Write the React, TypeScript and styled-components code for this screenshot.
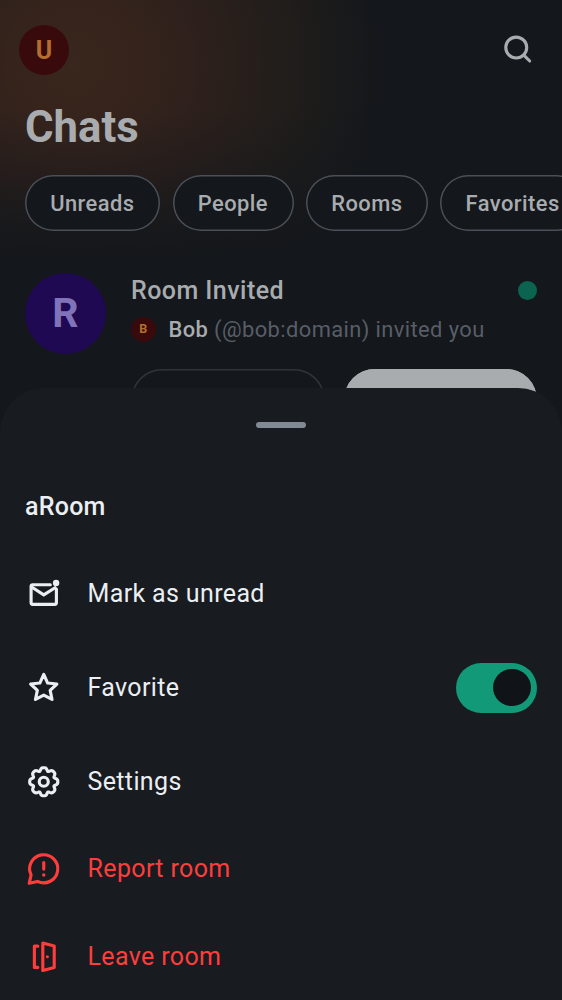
import React from "react";
import styled, { createGlobalStyle } from "styled-components";

const GlobalStyle = createGlobalStyle`
  * { box-sizing: border-box; }
  html, body { margin: 0; padding: 0; background: #14171b; }
  body { font-family: Roboto, sans-serif; overflow: hidden; }
`;

const Screen = styled.div`
  position: relative;
  width: 562px;
  height: 1000px;
  overflow: hidden;
  background: #14171b;
`;

const ChatsPage = styled.main`
  height: 100%;
  background:
    linear-gradient(to bottom, rgba(20, 23, 27, 0) 110px, rgba(20, 23, 27, 0.3) 170px, rgba(20, 23, 27, 1) 256px),
    radial-gradient(circle at 75px 65px, #39261c 0, #36241c 60px, #2d201c 130px, #231e1b 200px, #1b1b1b 255px, #14171b 305px);
`;

const TopBar = styled.header`
  display: flex;
  align-items: center;
  justify-content: space-between;
  height: 100px;
  padding: 0 25px 0 19px;
`;

const Avatar = styled.div<{ $size: number; $font: number; $bg: string; $fg: string }>`
  display: flex;
  flex: none;
  align-items: center;
  justify-content: center;
  width: ${(p) => p.$size}px;
  height: ${(p) => p.$size}px;
  border-radius: 50%;
  background: ${(p) => p.$bg};
  color: ${(p) => p.$fg};
  font-size: ${(p) => p.$font}px;
  font-weight: 700;
  line-height: 1;
`;

const Title = styled.h1`
  margin: 0;
  padding: 1px 25px 0;
  height: 75px;
  font-size: 43.7px;
  line-height: 53px;
  font-weight: 700;
  color: #a9acaf;
`;

const Filters = styled.nav`
  display: flex;
  gap: 12.5px;
  padding-left: 25px;
`;

const Chip = styled.button`
  flex: none;
  height: 56px;
  padding: 0 25.5px 0 25.2px;
  border: 0;
  border-radius: 28px;
  box-shadow: inset 0 0 0 1.5px #4b5058;
  background: #14171b;
  color: #a9acaf;
  font-family: inherit;
  font-size: 21.9px;
  font-weight: 500;
  letter-spacing: 0.45px;
  white-space: nowrap;
`;

const InviteRow = styled.section`
  display: flex;
  gap: 25px;
  padding: 42.4px 25px 0;
`;

const InviteBody = styled.div`
  flex: 1;
  min-width: 0;
`;

const InviteHead = styled.div`
  display: flex;
  align-items: center;
  justify-content: space-between;
  height: 35px;
`;

const RoomName = styled.span`
  font-size: 25px;
  font-weight: 500;
  letter-spacing: 0.45px;
  color: #a9acaf;
`;

const UnreadDot = styled.i`
  width: 19px;
  height: 19px;
  border-radius: 50%;
  background: #0b6450;
`;

const Inviter = styled.div`
  display: flex;
  align-items: center;
  gap: 12.5px;
  height: 42px;
  font-size: 21.9px;
  letter-spacing: 0.4px;
  color: #585e67;
  white-space: nowrap;

  b { font-weight: 500; color: #a9acaf; }
`;

const Actions = styled.div`
  display: flex;
  gap: 19px;
  padding-top: 18.6px;
`;

const ActionButton = styled.button<{ $filled?: boolean }>`
  flex: 1;
  height: 62.5px;
  border: 0;
  border-radius: 31.25px;
  box-shadow: inset 0 0 0 1.5px ${(p) => (p.$filled ? "#a9acaf" : "#303439")};
  background: ${(p) => (p.$filled ? "#a9acaf" : "transparent")};
`;

const Sheet = styled.aside`
  position: absolute;
  left: 0;
  right: 0;
  bottom: 0;
  height: 612.5px;
  border-radius: 44px 44px 0 0;
  background: #181b1f;
  color: #ebeef2;
`;

const HandleArea = styled.div`
  display: flex;
  justify-content: center;
  height: 75px;
  padding-top: 34.5px;
`;

const Handle = styled.div`
  width: 50px;
  height: 6px;
  border-radius: 3px;
  background: #808994;
`;

const SheetTitle = styled.h2`
  display: flex;
  align-items: center;
  height: 87.5px;
  margin: 0;
  padding: 0 25px;
  font-size: 25px;
  font-weight: 500;
  letter-spacing: 0.25px;
`;

const MenuItem = styled.div<{ $tall?: boolean; $danger?: boolean }>`
  display: flex;
  align-items: center;
  height: ${(p) => (p.$tall ? 100 : 87.5)}px;
  padding: 0 25px;
  gap: 25px;
  color: ${(p) => (p.$danger ? "#ff3d3d" : "#ebeef2")};
`;

const MenuLabel = styled.span`
  flex: 1;
  font-size: 25px;
  letter-spacing: 0.36px;
`;

const Switch = styled.div`
  display: flex;
  align-items: center;
  justify-content: flex-end;
  width: 81px;
  height: 50px;
  padding-right: 6.2px;
  border-radius: 25px;
  background: #129a78;
`;

const Thumb = styled.div`
  width: 37.5px;
  height: 37.5px;
  border-radius: 50%;
  background: #101317;
`;

const IconSvg = styled.svg`
  flex: none;
  width: 37.5px;
  height: 37.5px;
  fill: none;
  stroke: currentColor;
  stroke-width: 2;
  stroke-linecap: round;
  stroke-linejoin: round;
`;

const SearchSvg = styled(IconSvg)`
  color: #a9acaf;
`;

const Icon = ({ children }: { children: React.ReactNode }) => (
  <IconSvg viewBox="0 0 24 24">{children}</IconSvg>
);

const UnreadIcon = () => (
  <Icon>
    <path d="M16.2 6.2H4.9a1 1 0 0 0-1 1v10.6a1 1 0 0 0 1 1h14.2a1 1 0 0 0 1-1V9" />
    <path d="M4 7.5 12 12.7l8-5" strokeLinecap="butt" />
    <circle cx="19.9" cy="5.1" r="2.05" fill="currentColor" stroke="none" />
  </Icon>
);

const StarIcon = () => (
  <Icon>
    <path d="m12 3.5 2.5 5.5 5.9.6-4.3 4.1 1.2 5.8L12 16.7l-5.3 2.8 1.2-5.8-4.3-4.1 5.9-.6Z" />
  </Icon>
);

// Eight rounded teeth with narrow notches between them.
const gearPath = (() => {
  const pts: string[] = [];
  for (let i = 0; i < 160; i++) {
    const a = (i / 160) * Math.PI * 2;
    const r = 9 - 1.9 * Math.pow((1 - Math.cos(8 * a)) / 2, 2);
    pts.push(`${(12 + r * Math.sin(a)).toFixed(2)} ${(12 - r * Math.cos(a)).toFixed(2)}`);
  }
  return `M${pts.join("L")}Z`;
})();

const GearIcon = () => (
  <Icon>
    <path d={gearPath} />
    <circle cx="12" cy="12" r="2.9" />
  </Icon>
);

const ReportIcon = () => (
  <Icon>
    <path d="M3.9 16A9 9 0 1 1 8 20.1L2.7 21.3Z" />
    <path d="M12 8v4.2" />
    <circle cx="12" cy="16" r="1.1" fill="currentColor" stroke="none" />
  </Icon>
);

const LeaveIcon = () => (
  <Icon>
    <path d="M11.4 3.2 18.7 5.1v13.8l-7.3 1.9Z" />
    <path d="M8.2 5.2H6v13.6h2.2" />
    <circle cx="14.3" cy="12" r="1" fill="currentColor" stroke="none" />
  </Icon>
);

export default function App() {
  return (
    <>
      <GlobalStyle />
      <Screen>
        <ChatsPage>
          <TopBar>
            <Avatar $size={50} $font={25} $bg="#390a0c" $fg="#b36e30">U</Avatar>
            <SearchSvg viewBox="0 0 24 24">
              <circle cx="10.4" cy="10.6" r="6.7" />
              <path d="m15.2 15.4 3.8 3.8" />
            </SearchSvg>
          </TopBar>
          <Title>Chats</Title>
          <Filters>
            <Chip>Unreads</Chip>
            <Chip>People</Chip>
            <Chip>Rooms</Chip>
            <Chip>Favorites</Chip>
          </Filters>
          <InviteRow>
            <Avatar $size={81} $font={41} $bg="#1f0953" $fg="#8073b9">R</Avatar>
            <InviteBody>
              <InviteHead>
                <RoomName>Room Invited</RoomName>
                <UnreadDot />
              </InviteHead>
              <Inviter>
                <Avatar $size={25} $font={12.5} $bg="#390a0c" $fg="#b36e30">B</Avatar>
                <span><b>Bob</b> (@bob:domain) invited you</span>
              </Inviter>
              <Actions>
                <ActionButton />
                <ActionButton $filled />
              </Actions>
            </InviteBody>
          </InviteRow>
        </ChatsPage>
        <Sheet>
          <HandleArea><Handle /></HandleArea>
          <SheetTitle>aRoom</SheetTitle>
          <MenuItem><UnreadIcon /><MenuLabel>Mark as unread</MenuLabel></MenuItem>
          <MenuItem $tall>
            <StarIcon /><MenuLabel>Favorite</MenuLabel>
            <Switch><Thumb /></Switch>
          </MenuItem>
          <MenuItem><GearIcon /><MenuLabel>Settings</MenuLabel></MenuItem>
          <MenuItem $danger><ReportIcon /><MenuLabel>Report room</MenuLabel></MenuItem>
          <MenuItem $danger><LeaveIcon /><MenuLabel>Leave room</MenuLabel></MenuItem>
        </Sheet>
      </Screen>
    </>
  );
}
